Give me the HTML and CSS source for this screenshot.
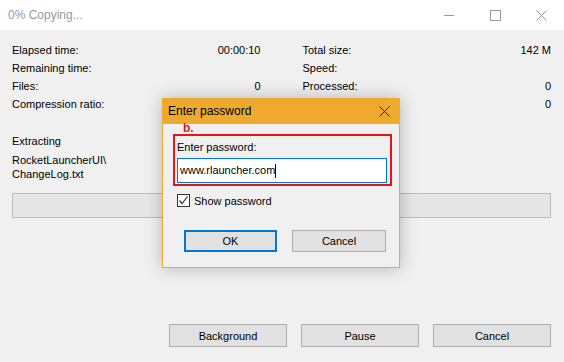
FILE: index.html
```html
<!DOCTYPE html>
<html lang="en">
<head>
    <meta charset="UTF-8">
    <title>0% Copying...</title>
    <link rel="stylesheet" href="styles.css">
</head>
<body>
    <!-- Main window -->
    <div class="window">
        <div class="titlebar">
            <span class="title">0% Copying...</span>
            <div class="controls">
                <span class="ctl"><svg width="11" height="11" viewBox="0 0 11 11"><path d="M0 5.5H10" stroke="#999" stroke-width="1"/></svg></span>
                <span class="ctl"><svg width="11" height="11" viewBox="0 0 11 11"><rect x="0.5" y="0.5" width="10" height="10" fill="none" stroke="#999"/></svg></span>
                <span class="ctl"><svg width="11" height="11" viewBox="0 0 11 11"><path d="M0.5 0.5L10.5 10.5M10.5 0.5L0.5 10.5" stroke="#999"/></svg></span>
            </div>
        </div>

        <div class="content">
            <div class="stats">
                <div class="stat"><span>Elapsed time:</span><span>00:00:10</span></div>
                <div class="stat"><span>Total size:</span><span>142 M</span></div>
                <div class="stat"><span>Remaining time:</span><span></span></div>
                <div class="stat"><span>Speed:</span><span></span></div>
                <div class="stat"><span>Files:</span><span>0</span></div>
                <div class="stat"><span>Processed:</span><span>0</span></div>
                <div class="stat"><span>Compression ratio:</span><span></span></div>
                <div class="stat"><span></span><span>0</span></div>
            </div>

            <div class="extracting">Extracting</div>
            <div class="path">RocketLauncherUI\<br>ChangeLog.txt</div>
            <div class="progress"></div>

            <div class="actions">
                <button class="btn">Background</button>
                <button class="btn">Pause</button>
                <button class="btn">Cancel</button>
            </div>
        </div>

        <!-- Password dialog -->
        <div class="dialog">
            <div class="dialog-title">
                <span>Enter password</span>
                <svg width="11" height="11" viewBox="0 0 11 11"><path d="M0.5 0.5L10.5 10.5M10.5 0.5L0.5 10.5" stroke="#222"/></svg>
            </div>
            <div class="dialog-body">
                <div class="mark">b.</div>
                <div class="highlight">
                    <div class="label">Enter password:</div>
                    <div class="input">www.rlauncher.com<span class="caret"></span></div>
                </div>
                <label class="check">
                    <span class="box"><svg width="11" height="11" viewBox="0 0 11 11"><path d="M1.5 5.5L4 8.5L9.5 1.5" fill="none" stroke="#333" stroke-width="1.2"/></svg></span>
                    Show password
                </label>
                <div class="dialog-actions">
                    <button class="btn btn-ok">OK</button>
                    <button class="btn btn-cancel">Cancel</button>
                </div>
            </div>
        </div>
    </div>
</body>
</html>
```
FILE: styles.css
```css
/* Window */
body { margin: 0; font-family: "Liberation Sans", Arial, sans-serif; font-size: 11px; color: #000; }
.window { position: relative; width: 564px; height: 362px; background-color: #f0f0f0; overflow: hidden; }

.titlebar { height: 30px; background-color: #fff; display: flex; align-items: center; justify-content: space-between; }
.title { font-size: 12px; color: #999; padding-left: 8px; }
.controls { display: flex; height: 30px; }
.ctl { width: 46px; display: flex; align-items: center; justify-content: center; }

.content { padding: 11px 13px 0 12px; }

.stats { display: grid; grid-template-columns: 1fr 1fr; column-gap: 42px; }
.stat { display: flex; justify-content: space-between; line-height: 18px; height: 18px; }

.extracting { margin-top: 19px; line-height: 18px; }
.path { margin-top: 3px; line-height: 14px; }
.progress { margin-top: 12px; height: 23px; border: 1px solid #bcbcbc; background-color: #e6e6e6; }

.actions { display: flex; justify-content: flex-end; gap: 14px; margin-top: 106px; }

.btn {
    font-family: "Liberation Sans", Arial, sans-serif;
    font-size: 11px;
    color: #000;
    width: 118px;
    height: 23px;
    padding: 0;
    background-color: #e1e1e1;
    border: 1px solid #adadad;
    border-radius: 0;
}

/* Dialog */
.dialog {
    position: absolute;
    left: 162px;
    top: 98px;
    width: 236px;
    height: 168px;
    border: 1px solid #eeaa2e;
    background-color: #f0f0f0;
    box-shadow: 0 0 16px rgba(0, 0, 0, 0.25);
}
.dialog-title {
    height: 26px;
    margin: -1px -1px 0 -1px;
    padding: 0 10px 0 6px;
    background-color: #eeaa2e;
    display: flex;
    align-items: center;
    justify-content: space-between;
    font-size: 12px;
}
.dialog-body { padding: 0 7px 0 10px; }
.mark { color: #e8141c; font-size: 12px; font-weight: bold; height: 10px; line-height: 8px; padding-left: 10px; }
.highlight { border: 2px solid #e8141c; padding: 3px 3px 3px 2px; height: 42px; }
.label { line-height: 16px; }
.input {
    margin-top: 3px;
    height: 23px;
    line-height: 23px;
    border: 1px solid #0078d7;
    background-color: #fff;
    padding-left: 2px;
    font-size: 11px;
}
.caret { display: inline-block; width: 1px; height: 14px; background-color: #000; vertical-align: middle; }

.check { display: flex; align-items: center; gap: 4px; margin-top: 8px; padding-left: 4px; }
.box { width: 11px; height: 11px; border: 1px solid #333; background-color: #fff; display: flex; }

.dialog-actions { display: flex; gap: 15px; margin-top: 23px; padding-left: 11px; }
.btn-ok { width: 93px; height: 22px; border: 2px solid #0078d7; }
.btn-cancel { width: 94px; height: 22px; }
```
